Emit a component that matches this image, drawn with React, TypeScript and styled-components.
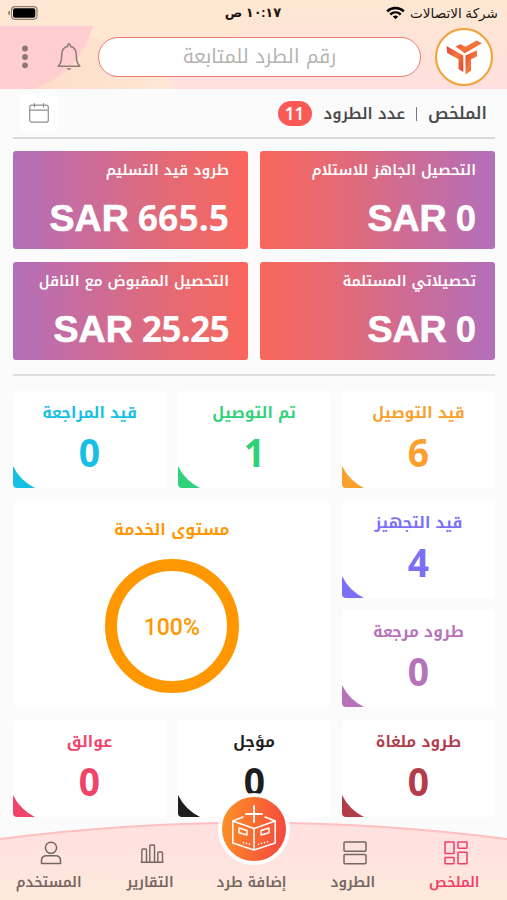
import React from 'react';
import styled, { createGlobalStyle } from 'styled-components';

const arabic = '"Noto Kufi Arabic","Noto Sans","DejaVu Sans",sans-serif';

const GlobalStyle = createGlobalStyle`
  *{box-sizing:border-box}
  html,body{margin:0;background:#fbfbfc}
  body{font-family:${arabic};overflow:hidden}
`;

const Screen = styled.div`
  width:507px;height:900px;display:flex;flex-direction:column;
  direction:rtl;background:#fbfbfc;overflow:hidden;
`;

const Header = styled.header`
  position:relative;height:89px;flex:none;display:flex;flex-direction:column;
`;
const Backdrop = styled.svg`position:absolute;inset:0;width:100%;height:100%;`;
const StatusBar = styled.div`
  position:relative;height:26px;display:grid;grid-template-columns:1fr 1fr 1fr;align-items:center;
  padding:0 9px 0 8px;color:#1c1512;font-family:"Noto Sans","DejaVu Sans",sans-serif;
`;
const Carrier = styled.div`
  display:flex;align-items:center;gap:5px;font-size:13.6px;line-height:24px;white-space:nowrap;
`;
const Clock = styled.div`text-align:center;font-size:13px;font-weight:700;line-height:22px;padding-bottom:2px;`;
const BatterySlot = styled.div`display:flex;justify-content:flex-end;`;

const Toolbar = styled.div`
  position:relative;flex:1;display:flex;align-items:center;padding:0 14px 2px 20px;
`;
const Brand = styled.div`
  width:58px;height:58px;border-radius:50%;border:2.500px solid #f5a033;background:#fff;
  display:flex;align-items:center;justify-content:center;flex:none;
`;
const Search = styled.div`
  width:323px;height:40px;margin-right:14px;border:1.5px solid #ee7a74;border-radius:20px;background:#fff;
  color:#b4b3b3;font-size:19.1px;line-height:38px;text-align:center;
`;
const BellSlot = styled.div`margin-right:17px;display:flex;`;
const MenuSlot = styled.div`margin-right:28px;display:flex;`;

const Content = styled.main`padding:0 12px 0 13px;display:flex;flex-direction:column;`;
const Summary = styled.div`
  height:50px;border-bottom:2px solid #d9d9da;display:flex;align-items:center;
  padding:0 8px 0 7px;color:#4b4a4b;white-space:nowrap;
`;
const SummaryText = styled.span<{ $size: number }>`
  font-size:${p => p.$size}px;font-weight:600;line-height:46px;padding-top:2px;
`;
const Separator = styled.span`width:1px;height:14px;background:#777;margin:2px 11px 0 11px;`;
const Count = styled.span`
  width:34px;height:25px;border-radius:13px;background:#fb5955;color:#fff;margin-right:12px;
  font:600 17px/25px "Noto Sans",sans-serif;text-align:center;
`;
const CalendarButton = styled.div`
  margin-right:auto;width:38px;height:38px;border-radius:6px;background:#fff;
  display:flex;align-items:center;justify-content:center;
`;

const Balances = styled.section`
  display:grid;grid-template-columns:235px 235px;justify-content:space-between;gap:13px 0;
  padding:12px 0 14px;border-bottom:2px solid #dededf;
`;
const Balance = styled.div<{ $side: 'right' | 'left' }>`
  height:98px;border-radius:3px;padding:5px 19px 0;color:#fff;overflow:hidden;
  background:linear-gradient(to ${p => p.$side}, #f9665c 0%, #e56a74 32%, #cb6c99 67%, #b26fba 100%);
`;
const BalanceTitle = styled.div`font-size:14.6px;font-weight:600;line-height:28px;white-space:nowrap;`;
const Amount = styled.div`
  direction:ltr;display:flex;justify-content:flex-end;align-items:baseline;gap:9px;
  height:60px;line-height:60px;margin-top:3px;font-weight:700;
`;
const Currency = styled.span`font-family:"Liberation Sans",sans-serif;font-size:37.5px;-webkit-text-stroke:.7px #fff;`;
const Value = styled.span<{ $tight: boolean }>`
  font-family:"Noto Sans",sans-serif;font-size:35.5px;letter-spacing:${p => (p.$tight ? '-.8px' : '0')};
`;

const Stats = styled.section`
  display:grid;grid-template-columns:153px 153px 153px;justify-content:space-between;
  grid-template-rows:97px 97px 97px 97px;row-gap:12.5px;padding-top:15px;
`;
const Tile = styled.div<{ $color: string }>`
  position:relative;background:#fff;border-radius:4px;color:${p => p.$color};text-align:center;overflow:hidden;
`;
const TileTitle = styled.div`font-size:15.4px;font-weight:700;line-height:30px;margin-top:7px;white-space:nowrap;`;
const TileValue = styled.div`font:700 40px/50px "Noto Sans",sans-serif;margin-top:-1px;transform:scaleX(.93);`;
const Corner = styled.svg`position:absolute;left:0;bottom:0;width:22px;height:22px;`;
const ServiceLevel = styled.div`
  grid-column:2 / 4;grid-row:2 / 4;background:#fff;border-radius:4px;color:#ff9800;
  display:flex;flex-direction:column;align-items:center;
`;
const ServiceTitle = styled.div`font-size:15.9px;font-weight:700;line-height:30px;margin-top:14px;`;
const Ring = styled.div`
  width:134px;height:134px;border:12px solid #ff9800;border-radius:50%;margin-top:14px;
  display:flex;align-items:center;justify-content:center;direction:ltr;padding-top:3px;
  font:500 23px/1 Roboto,sans-serif;
`;

const NavBar = styled.nav`
  position:absolute;left:0;top:795px;width:507px;height:105px;
`;
const NavItems = styled.div`
  position:relative;height:105px;display:grid;grid-template-columns:repeat(5,1fr);
  align-items:end;align-content:end;
`;
const NavItem = styled.div<{ $active?: boolean }>`
  display:flex;flex-direction:column;align-items:center;
  color:${p => (p.$active ? '#ee3f68' : '#746660')};
`;
const NavLabel = styled.div`
  font-size:14.1px;font-weight:600;line-height:26px;margin-top:5px;margin-bottom:4px;padding-right:4px;white-space:nowrap;
`;
const AddButton = styled.div`
  width:72px;height:72px;border-radius:50%;border:4px solid #fff;
  background:linear-gradient(100deg,#fb9b24 0%,#f96b32 50%,#f23f43 100%);background-origin:border-box;
  display:flex;align-items:center;justify-content:center;
`;

const Battery = () => (
  <svg width="30" height="14" viewBox="0 0 30 14">
    <path d="M2 4.600v4.800C.7 9 0 8 0 7s.7-2 2-2.400z" fill="#9b8577" />
    <rect x="3.500" y=".7" width="25.500" height="12.600" rx="3.500" fill="none" stroke="#8f7d70" strokeWidth="1.200" />
    <rect x="5" y="2.300" width="22.300" height="9.400" rx="2" fill="#000" />
  </svg>
);
const Wifi = () => (
  <svg width="19" height="14" viewBox="0 0 20 14" fill="none" stroke="#000" strokeWidth="2.600">
    <path d="M1.200 5.200C6.200.5 13.800.5 18.800 5.200" />
    <path d="M4.500 8.600C7.700 5.600 12.300 5.600 15.500 8.600" />
    <path d="M10 13.600 7.200 10.700Q10 8.500 12.800 10.700Z" fill="#000" stroke="none" />
  </svg>
);
const Logo = () => (
  <svg width="38" height="38" viewBox="0 0 38 38">
    <defs>
      <linearGradient id="mark" x1="0" x2="1" y1="0" y2="1">
        <stop offset="0" stopColor="#e9443a" /><stop offset=".5" stopColor="#f0783a" /><stop offset="1" stopColor="#e5402f" />
      </linearGradient>
    </defs>
    <g fill="url(#mark)">
      <path d="M1.500 8 18.300 17.500V34l-4.800-3V21.300L2.200 15Z" />
      <path d="M10.500 8.400 15.500 6.200 20.500 8.700 31.500 2.500 37 5.200 19.700 15.200Z" />
      <path d="M20.500 17.500 32 12.200V18.200L26 21.500V32.500L20.500 36.500Z" />
    </g>
  </svg>
);
const Bell = () => (
  <svg width="24" height="28" viewBox="0 0 24 28" fill="none" stroke="#8b7a75" strokeWidth="1.500" strokeLinecap="round" strokeLinejoin="round">
    <path d="M10.600 3.600Q10.300 1 12 1T13.400 3.600C17.500 4.400 19.300 8 19.300 12 19.300 18.500 20.300 20.300 22.800 23.300H1.200C3.700 20.300 4.700 18.500 4.700 12 4.700 8 6.500 4.400 10.600 3.600Z" />
    <path d="M9.300 25.300Q12 28.500 14.700 25.300Z" fill="#8b7a75" stroke="none" />
  </svg>
);
const Dots = () => (
  <svg width="8" height="24" viewBox="0 0 8 24" fill="#89797a">
    <circle cx="4" cy="3.500" r="2.900" /><circle cx="4" cy="12" r="2.900" /><circle cx="4" cy="20.300" r="2.900" />
  </svg>
);
const Calendar = () => (
  <svg width="20" height="20" viewBox="0 0 20 20" fill="none" stroke="#8f8f8f" strokeWidth="1.200" strokeLinecap="round">
    <rect x=".7" y="2.200" width="18.600" height="17" rx="2" /><path d="M.7 7.200H19.300M5.500.7v3.200M14.500.7v3.200" />
  </svg>
);

const DashboardIcon = () => (
  <svg width="24" height="24" viewBox="0 0 24 24" fill="none" stroke="currentColor" strokeWidth="1.500" strokeLinejoin="round">
    <rect x="1" y="1" width="9" height="11.500" rx=".6" /><rect x="14" y="1" width="9" height="6.200" rx=".6" />
    <rect x="1" y="16.500" width="9" height="6.200" rx=".6" /><rect x="14" y="11.200" width="9" height="11.500" rx=".6" />
  </svg>
);
const ListIcon = () => (
  <svg width="24" height="24" viewBox="0 0 24 24" fill="none" stroke="currentColor" strokeWidth="1.500">
    <rect x="1" y="1" width="22" height="9.200" rx="1" /><rect x="1" y="13.600" width="22" height="9.200" rx="1" />
  </svg>
);
const ChartIcon = () => (
  <svg width="24" height="24" viewBox="0 0 24 24" fill="none" stroke="currentColor" strokeWidth="1.400" strokeLinejoin="round">
    <path d="M1.800 21.300V9Q1.800 8 2.800 8H5.500Q6.500 8 6.500 9V21.300M9.800 21.300V5Q9.800 4 10.800 4H13.500Q14.500 4 14.500 5V21.300M17.800 21.300V12Q17.800 11 18.800 11H21.500Q22.500 11 22.500 12V21.300M.8 21.300H23.500" />
  </svg>
);
const UserIcon = () => (
  <svg width="22" height="24" viewBox="0 0 22 24" fill="none" stroke="currentColor" strokeWidth="1.500" strokeLinejoin="round">
    <circle cx="11" cy="6.800" r="5.600" /><path d="M1.500 22.500V19.500Q1.500 14.700 6.500 14.700H15.500Q20.500 14.700 20.500 19.500V22.500Z" />
  </svg>
);
const BoxIcon = () => (
  <svg width="46" height="50" viewBox="0 0 46 50" fill="none" stroke="#fff" strokeWidth="1.500" strokeLinejoin="round" strokeLinecap="round">
    <path d="M23 2V18M15 10H31" strokeWidth="1.800" />
    <path d="M12 13 1.800 17V39L23 46 44.200 39V17L34 13M1.800 17 23 24.500 44.200 17M23 24.500V46" />
    <path d="M8 24 16 26.500V31L8 28.700ZM38 24 30 26.500V31L38 28.700Z" />
    <path d="M12.500 38.500v.2M15.500 39.300v.2M18.500 40v.2M33.500 38.500v.2M30.500 39.300v.2M27.500 40v.2M36.500 37.700v.2" />
  </svg>
);

type BalanceData = { title: string; value: string; side: 'right' | 'left' };
const balances: BalanceData[] = [
  { title: 'التحصيل الجاهز للاستلام', value: '0', side: 'right' },
  { title: 'طرود قيد التسليم', value: '665.5', side: 'left' },
  { title: 'تحصيلاتي المستلمة', value: '0', side: 'right' },
  { title: 'التحصيل المقبوض مع الناقل', value: '25.25', side: 'left' },
];

const StatTile = ({ title, value, color }: { title: string; value: string; color: string }) => (
  <Tile $color={color}>
    <TileTitle>{title}</TileTitle>
    <TileValue>{value}</TileValue>
    <Corner viewBox="0 0 22 22"><path d="M0 0Q7 14.500 22 22H2.500Q0 22 0 19.500Z" fill={color} /></Corner>
  </Tile>
);

export default function App() {
  return (
    <>
      <GlobalStyle />
      <Screen>
        <Header>
          <Backdrop viewBox="0 0 507 89" preserveAspectRatio="none">
            <defs>
              <linearGradient id="warm" x1="0" x2="0" y1="0" y2="1">
                <stop offset="0" stopColor="#fee8d3" /><stop offset=".3" stopColor="#fee5d5" /><stop offset="1" stopColor="#ffe0df" />
              </linearGradient>
              <linearGradient id="peach" x1="0" x2="1" y1="0" y2="0">
                <stop offset="0" stopColor="#fedcc8" /><stop offset="1" stopColor="#fee8d5" />
              </linearGradient>
            </defs>
            <rect width="507" height="89" fill="url(#warm)" />
            <path d="M0 0H250V26L230 35 165 75 175 89H0Z" fill="#fee8d4" />
            <path d="M70 36Q130 36 165 75L175 89H20Z" fill="url(#peach)" />
            <path d="M0 26H93Q80 72 34 89H0Z" fill="#ffced0" />
          </Backdrop>
          <StatusBar>
            <Carrier><span>شركة الاتصالات</span><Wifi /></Carrier>
            <Clock>١٠:١٧ ص</Clock>
            <BatterySlot><Battery /></BatterySlot>
          </StatusBar>
          <Toolbar>
            <Brand><Logo /></Brand>
            <Search>رقم الطرد للمتابعة</Search>
            <BellSlot><Bell /></BellSlot>
            <MenuSlot><Dots /></MenuSlot>
          </Toolbar>
        </Header>
        <Content>
          <Summary>
            <SummaryText $size={16.5}>الملخص</SummaryText>
            <Separator />
            <SummaryText $size={15.5}>عدد الطرود</SummaryText>
            <Count>11</Count>
            <CalendarButton><Calendar /></CalendarButton>
          </Summary>
          <Balances>
            {balances.map(b => (
              <Balance key={b.title} $side={b.side}>
                <BalanceTitle>{b.title}</BalanceTitle>
                <Amount><Currency>SAR</Currency><Value $tight={b.value === '25.25'}>{b.value}</Value></Amount>
              </Balance>
            ))}
          </Balances>
          <Stats>
            <StatTile title="قيد التوصيل" value="6" color="#fba02c" />
            <StatTile title="تم التوصيل" value="1" color="#2fd27a" />
            <StatTile title="قيد المراجعة" value="0" color="#16c0e4" />
            <StatTile title="قيد التجهيز" value="4" color="#7c70fa" />
            <ServiceLevel>
              <ServiceTitle>مستوى الخدمة</ServiceTitle>
              <Ring>100%</Ring>
            </ServiceLevel>
            <StatTile title="طرود مرجعة" value="0" color="#b672ba" />
            <StatTile title="طرود ملغاة" value="0" color="#b33c4b" />
            <StatTile title="مؤجل" value="0" color="#1e1e20" />
            <StatTile title="عوالق" value="0" color="#f0446a" />
          </Stats>
        </Content>
        <NavBar>
          <Backdrop viewBox="0 0 507 105" preserveAspectRatio="none">
            <defs>
              <linearGradient id="dock" x1="0" x2="0" y1="0" y2="1">
                <stop offset=".25" stopColor="#ffe1e0" /><stop offset="1" stopColor="#feeadb" />
              </linearGradient>
            </defs>
            <path d="M0 44Q254 11.500 507 44V105H0Z" fill="url(#dock)" />
            <path d="M0 44Q254 11.500 507 44" fill="none" stroke="#fdbfc0" strokeWidth="2" />
          </Backdrop>
          <NavItems>
            <NavItem $active><DashboardIcon /><NavLabel>الملخص</NavLabel></NavItem>
            <NavItem><ListIcon /><NavLabel>الطرود</NavLabel></NavItem>
            <NavItem><AddButton><BoxIcon /></AddButton><NavLabel>إضافة طرد</NavLabel></NavItem>
            <NavItem><ChartIcon /><NavLabel>التقارير</NavLabel></NavItem>
            <NavItem><UserIcon /><NavLabel>المستخدم</NavLabel></NavItem>
          </NavItems>
        </NavBar>
      </Screen>
    </>
  );
}
